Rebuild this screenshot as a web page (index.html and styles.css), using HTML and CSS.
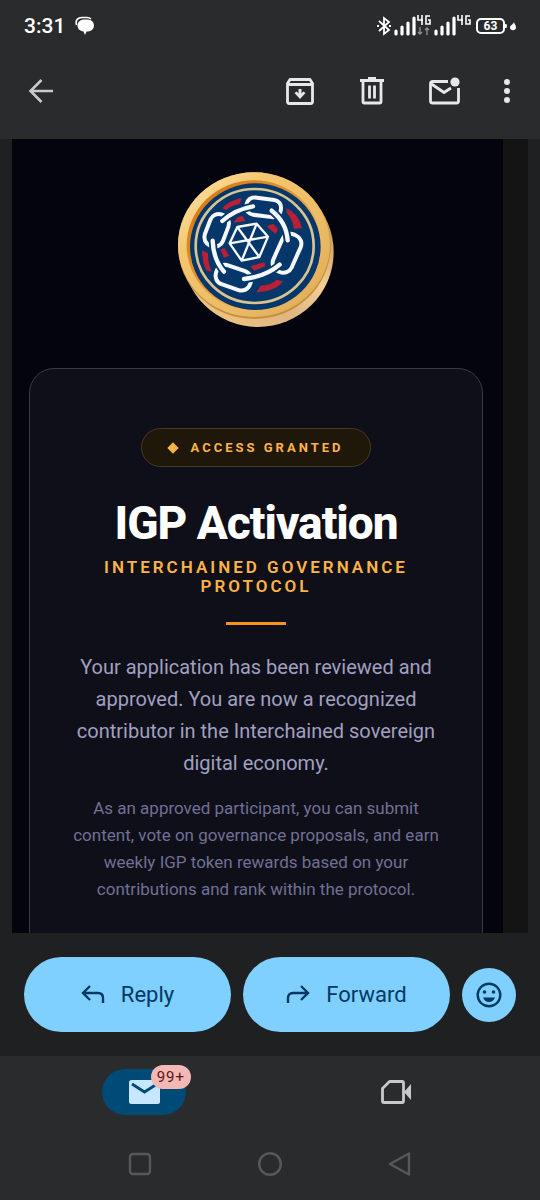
FILE: index.html
```html
<!DOCTYPE html>
<html lang="en">
    <head>
        <title>IGP Activation</title>
        <meta charset="UTF-8">
        <meta name="viewport" content="width=device-width, initial-scale=1">
        <link rel="stylesheet" href="styles.css">
    </head>
    <body>
        <div class="status-bar">
            <span class="clock">3:31</span>
            <svg class="chat" width="20" height="20" viewBox="0 0 20 20">
                <path d="M1.500 9C0 4 3 1.500 7 1.500h5c2 0 3 .5 4 1.500" fill="none" stroke="#fff" stroke-width="1.600"/>
                <path d="M9 3.500h4a6 6 0 0 1 0 12h-1.500L10 19l-1.500-3.500C5 15 2.500 13 2.500 9.500c0-3.500 3-6 6.500-6z" fill="#fff"/>
            </svg>
            <div class="status-icons">
                <svg width="14" height="20" viewBox="0 0 14 20" fill="none" stroke="#fff" stroke-width="1.800">
                    <path d="M2 5l10 9-5 4V2l5 4-10 9"/>
                    <path d="M0 10h2M12 10h2"/>
                </svg>
                <svg width="37" height="22" viewBox="0 0 37 22">
                    <path d="M2 16v3M8 12v7M14 8v11M20 3v16" stroke="#fff" stroke-width="3.200" stroke-linecap="round"/>
                    <path d="M24 0v5h5M28 0v10M36 1h-4v8h4v-4h-2" fill="none" stroke="#fff" stroke-width="1.600"/>
                    <path d="M26 12v7m-2-2l2 2 2-2M33 20v-7m-2 2l2-2 2 2" fill="none" stroke="#8c8d8e" stroke-width="1.400"/>
                </svg>
                <svg width="37" height="22" viewBox="0 0 37 22">
                    <path d="M2 16v3M8 12v7M14 8v11M20 3v16" stroke="#fff" stroke-width="3.200" stroke-linecap="round"/>
                    <path d="M24 0v5h5M28 0v10M36 1h-4v8h4v-4h-2" fill="none" stroke="#fff" stroke-width="1.600"/>
                </svg>
                <div class="battery">
                    <span class="level">63</span>
                    <svg width="11" height="10" viewBox="0 0 11 10" fill="#fff">
                        <path d="M0 3h1q1 0 1 2t-1 2H0z"/>
                        <path d="M9 1c0 2 2 3 2 5.500C11 10 5 10 5 6.500 5 4 8 4 9 1z"/>
                    </svg>
                </div>
            </div>
        </div>

        <header class="app-bar">
            <button class="icon-button back" aria-label="Back">
                <svg width="26" height="26" viewBox="0 0 26 26" fill="none" stroke="#c9c9c9" stroke-width="2.600">
                    <path d="M25 13H3M13.500 2L2.500 13l11 11"/>
                </svg>
            </button>
            <button class="icon-button" aria-label="Archive">
                <svg width="28" height="28" viewBox="0 0 28 28" fill="none" stroke="#e8e8e8" stroke-width="2.800" stroke-linejoin="round">
                    <path d="M1.500 6.500L4 2.500h20l2.500 4V25a1.500 1.500 0 0 1-1.500 1.500H3A1.500 1.500 0 0 1 1.500 25zM1.500 7.500h25"/>
                    <path d="M14 12v8" stroke-width="3"/>
                    <path d="M8.500 16l5.500 6 5.500-6-2-1.500-3.500 3-3.500-3z" fill="#e8e8e8" stroke="none"/>
                </svg>
            </button>
            <button class="icon-button" aria-label="Delete">
                <svg width="26" height="28" viewBox="0 0 26 28" fill="none" stroke="#e8e8e8" stroke-width="2.800">
                    <path d="M1 3.500h24M9 1.500h8M4 4v21a1 1 0 0 0 1 1h16a1 1 0 0 0 1-1V4M10.500 8.500v13M15.500 8.500v13"/>
                </svg>
            </button>
            <button class="icon-button" aria-label="Mark as unread">
                <svg width="31" height="28" viewBox="0 0 31 28" fill="none" stroke="#e8e8e8" stroke-width="2.800" stroke-linejoin="round">
                    <path d="M19 4.500H3.500a2 2 0 0 0-2 2V24a2 2 0 0 0 2 2h24a2 2 0 0 0 2-2V11M2.500 7L15 15.500l7-4.500"/>
                    <circle cx="26" cy="5" r="4.600" fill="#e8e8e8" stroke="none"/>
                </svg>
            </button>
            <button class="icon-button more" aria-label="More options">
                <svg width="6" height="26" viewBox="0 0 6 26" fill="#e8e8e8">
                    <circle cx="3" cy="4" r="3"/>
                    <circle cx="3" cy="13" r="3"/>
                    <circle cx="3" cy="22" r="3"/>
                </svg>
            </button>
        </header>

        <main class="message">
            <div class="mail">
                <svg class="coin" viewBox="26 35 468 468" role="img" aria-label="Interchained">
                    <defs>
                        <linearGradient id="rim" x1="0" y1="0" x2="1" y2="1">
                            <stop offset="0" stop-color="#ffe9b0"/>
                            <stop offset=".3" stop-color="#f3c66f"/>
                            <stop offset=".65" stop-color="#ecbb65"/>
                            <stop offset="1" stop-color="#dda853"/>
                        </linearGradient>
                        <linearGradient id="edge" x1="0" y1="1" x2="1" y2="0">
                            <stop offset="0" stop-color="#f4cb80"/>
                            <stop offset=".4" stop-color="#dfb583"/>
                            <stop offset=".6" stop-color="#f4cf99"/>
                            <stop offset="1" stop-color="#a5702c"/>
                        </linearGradient>
                        <linearGradient id="inset" x1="0" y1="0" x2="1" y2="1">
                            <stop offset="0" stop-color="#cf7010"/>
                            <stop offset=".5" stop-color="#e99b32"/>
                            <stop offset="1" stop-color="#ffe09a"/>
                        </linearGradient>
                    </defs>
                    <ellipse cx="266" cy="275" rx="227" ry="225" fill="url(#edge)"/>
                    <ellipse cx="255" cy="256" rx="229" ry="220" fill="#c6903f"/>
                    <ellipse cx="254" cy="253" rx="228" ry="217" fill="url(#rim)"/>
                    <ellipse cx="254" cy="255" rx="202" ry="195" fill="url(#inset)"/>
                    <ellipse cx="258" cy="259" rx="196" ry="190" fill="#06376a"/>
                    <ellipse cx="256" cy="257" rx="177" ry="171" fill="none" stroke="#d9c491" stroke-width="8"/>
                    <g fill="#b91f35">
                        <path d="M159 144Q175 122 216 113L212 130Q185 136 171 149z"/>
                        <path d="M192 187L205 170 220 167 228 182z"/>
                        <path d="M352 144Q388 160 398 203L374 206Q370 176 352 157z"/>
                        <path d="M292 198L311 190 326 206 319 222z"/>
                        <path d="M98 270L116 278Q116 310 127 334L110 330Q98 303 98 270z"/>
                        <path d="M153 268L165 263 180 286 164 293z"/>
                        <path d="M243 318L285 305 288 318 255 331z"/>
                        <path d="M261 396L274 376Q308 373 322 358L341 363Q320 393 261 396z"/>
                    </g>
                    <!-- chain links -->
                    <g fill="none" stroke="#f5f8fd" stroke-width="12">
                        <rect x="-52" y="-26" width="104" height="52" rx="23" transform="translate(283 141) rotate(7)"/>
                        <rect x="-60" y="-30" width="120" height="60" rx="27" transform="translate(353 279) rotate(-66)"/>
                        <rect x="-50" y="-29" width="100" height="58" rx="27" transform="translate(142 210) rotate(-69)"/>
                        <rect x="-54" y="-30" width="108" height="60" rx="27" transform="translate(192 352) rotate(19)"/>
                    </g>
                    <!-- bars between the links -->
                    <g fill="none" stroke-linecap="round">
                        <path d="M159 182Q196 148 251 138M307 151Q351 185 355 240M130 241Q132 298 164 334M224 356Q289 349 331 313" stroke="#06376a" stroke-width="24"/>
                        <path d="M159 182Q196 148 251 138M307 151Q351 185 355 240M130 241Q132 298 164 334M224 356Q289 349 331 313" stroke="#f5f8fd" stroke-width="13"/>
                    </g>
                    <path d="M262 190L296 229 270 290 217 301 181 249 204 200zL217 301M296 229L181 249M204 200L270 290" fill="none" stroke="#f5f8fd" stroke-width="7" stroke-linejoin="round"/>
                </svg>

                <article class="card">
                    <div class="granted"><span class="diamond"></span>ACCESS GRANTED</div>
                    <h1>IGP Activation</h1>
                    <h2>INTERCHAINED GOVERNANCE PROTOCOL</h2>
                    <hr class="divider">
                    <p class="lead">Your application has been reviewed and approved. You are now a recognized contributor in the Interchained sovereign digital economy.</p>
                    <p class="details">As an approved participant, you can submit content, vote on governance proposals, and earn weekly IGP token rewards based on your contributions and rank within the protocol.</p>
                </article>
            </div>
        </main>

        <div class="actions">
            <button class="action">
                <svg width="24" height="20" viewBox="0 0 24 20" fill="none" stroke="#003a63" stroke-width="2.400">
                    <path d="M9 1L2 8l7 7M2 8h15q5 0 5 5v5"/>
                </svg>
                Reply
            </button>
            <button class="action">
                <svg width="24" height="20" viewBox="0 0 24 20" fill="none" stroke="#003a63" stroke-width="2.400">
                    <path d="M15 1l7 7-7 7M22 8H7q-5 0-5 5v5"/>
                </svg>
                Forward
            </button>
            <button class="emoji" aria-label="Add emoji reaction">
                <svg width="26" height="26" viewBox="0 0 26 26">
                    <circle cx="13" cy="13" r="11.300" fill="none" stroke="#003a63" stroke-width="2.400"/>
                    <circle cx="8.500" cy="10" r="1.800" fill="#003a63"/>
                    <circle cx="17.500" cy="10" r="1.800" fill="#003a63"/>
                    <path d="M7 15.500h12q-2 4.500-6 4.500t-6-4.500z" fill="#003a63"/>
                </svg>
            </button>
        </div>

        <nav class="tabs">
            <a class="tab active" href="#mail" aria-label="Mail">
                <svg width="31" height="24" viewBox="0 0 31 24">
                    <rect width="31" height="24" rx="2.500" fill="#c5e7ff"/>
                    <path d="M3 4l12.500 8L28 4" fill="none" stroke="#004a77" stroke-width="2.800"/>
                </svg>
                <span class="badge">99+</span>
            </a>
            <a class="tab" href="#meet" aria-label="Meet">
                <svg width="30" height="24" viewBox="0 0 30 24">
                    <path d="M8.500 1.500H21a1.500 1.500 0 0 1 1.500 1.500v18a1.500 1.500 0 0 1-1.500 1.500H3A1.500 1.500 0 0 1 1.500 21V8.500z" fill="none" stroke="#c8c9ca" stroke-width="2.800" stroke-linejoin="round"/>
                    <path d="M23 12l7-8v16z" fill="#c8c9ca"/>
                </svg>
            </a>
        </nav>

        <div class="system-nav">
            <button class="icon-button" aria-label="Recent apps">
                <svg width="24" height="24" viewBox="0 0 24 24" fill="none" stroke="#575859" stroke-width="2.400">
                    <rect x="2" y="2" width="20" height="20" rx="3"/>
                </svg>
            </button>
            <button class="icon-button" aria-label="Home">
                <svg width="24" height="24" viewBox="0 0 24 24" fill="none" stroke="#575859" stroke-width="2.400">
                    <circle cx="12" cy="12" r="10.800"/>
                </svg>
            </button>
            <button class="icon-button" aria-label="System back">
                <svg width="24" height="24" viewBox="0 0 24 24" fill="none" stroke="#575859" stroke-width="2.400" stroke-linejoin="round">
                    <path d="M21 1.500v21L2 12z"/>
                </svg>
            </button>
        </div>
    </body>
</html>
```
FILE: styles.css
```css
* {
    box-sizing: border-box;
}

body {
    display: flex;
    flex-direction: column;
    height: 100vh;
    margin: 0;
    background-color: #1e2021;
    color: #fff;
    font-family: Roboto, "Liberation Sans", sans-serif;
}

button {
    padding: 0;
    border: 0;
    background: none;
    font-family: inherit;
    cursor: pointer;
}

svg {
    display: block;
    flex: none;
}

/* status bar */
.status-bar {
    display: flex;
    align-items: center;
    height: 52px;
    padding: 0 24px;
    background-color: #2a2b2d;
}

.clock {
    font-size: 21px;
    font-weight: 500;
}

.chat {
    margin-left: 10px;
}

.status-icons {
    display: flex;
    align-items: center;
    gap: 3px;
    margin-left: auto;
}

.battery {
    display: flex;
    align-items: center;
    margin-left: 2px;
}

.level {
    width: 29px;
    border: 2px solid #fff;
    border-radius: 5px;
    font-size: 12px;
    font-weight: 700;
    line-height: 12px;
    text-align: center;
}

/* toolbar */
.app-bar {
    display: flex;
    align-items: center;
    gap: 24px;
    height: 87px;
    padding: 0 9px 9px 17px;
    background-color: #2a2b2d;
}

.icon-button {
    display: flex;
    align-items: center;
    justify-content: center;
    width: 48px;
    height: 48px;
}

.back {
    margin-right: auto;
}

.more {
    margin-left: -9px;
}

/* message */
.message {
    flex: 1;
    min-height: 0;
    margin: 0 12px;
    padding-right: 25px;
    overflow: hidden;
    background-color: #141414;
}

.mail {
    min-height: 100%;
    padding: 33px 20px 0 17px;
    background-color: #04040e;
}

.coin {
    width: 156px;
    height: 156px;
    margin: 0 auto 40px;
}

.card {
    padding: 59px 36px 60px;
    border: 1px solid #3a3a43;
    border-radius: 25px;
    background-color: #0f0f19;
    text-align: center;
}

.granted {
    display: inline-flex;
    align-items: center;
    height: 39px;
    padding: 0 27px;
    border: 1px solid #463a22;
    border-radius: 20px;
    background-color: #1f170a;
    color: #ffb347;
    font-size: 13px;
    font-weight: 700;
    letter-spacing: 3px;
}

.diamond {
    width: 8px;
    height: 8px;
    margin-right: 14px;
    background-color: #ffb347;
    transform: rotate(45deg);
}

h1 {
    margin: 29px 0 8px;
    font-size: 46px;
    font-weight: 800;
    line-height: 54px;
    letter-spacing: -1px;
}

h2 {
    margin: 0;
    color: #ffb347;
    font-size: 17px;
    font-weight: 600;
    line-height: 19px;
    letter-spacing: 3px;
}

.divider {
    width: 60px;
    height: 3px;
    margin: 26px auto;
    border: 0;
    background-color: #f7931a;
}

.lead {
    margin: 0 0 16px;
    color: #a0a0c0;
    font-size: 20px;
    line-height: 32px;
}

.details {
    margin: 0;
    color: #707094;
    font-size: 17px;
    line-height: 27px;
}

/* reply row */
.actions {
    display: flex;
    align-items: center;
    gap: 12px;
    height: 123px;
    padding: 0 24px;
}

.action {
    display: flex;
    flex: 1;
    align-items: center;
    justify-content: center;
    gap: 16px;
    height: 75px;
    border-radius: 38px;
    background-color: #7fcfff;
    color: #003a63;
    font-size: 22px;
}

.emoji {
    display: flex;
    align-items: center;
    justify-content: center;
    width: 54px;
    height: 54px;
    border-radius: 50%;
    background-color: #7fcfff;
}

/* bottom tabs */
.tabs {
    display: flex;
    justify-content: space-around;
    padding: 13px 18px;
    background-color: #2a2b2d;
}

.tab {
    position: relative;
    display: flex;
    align-items: center;
    justify-content: center;
    width: 84px;
    height: 46px;
    border-radius: 23px;
}

.active {
    background-color: #004a77;
}

.badge {
    position: absolute;
    top: -4px;
    right: -5px;
    padding: 0 6px;
    border-radius: 12px;
    background-color: #f2b8b5;
    color: #601410;
    font-size: 15px;
    line-height: 24px;
    letter-spacing: 1px;
}

.system-nav {
    display: flex;
    justify-content: space-around;
    height: 72px;
    padding: 12px 75px;
    background-color: #2a2b2d;
}
```
